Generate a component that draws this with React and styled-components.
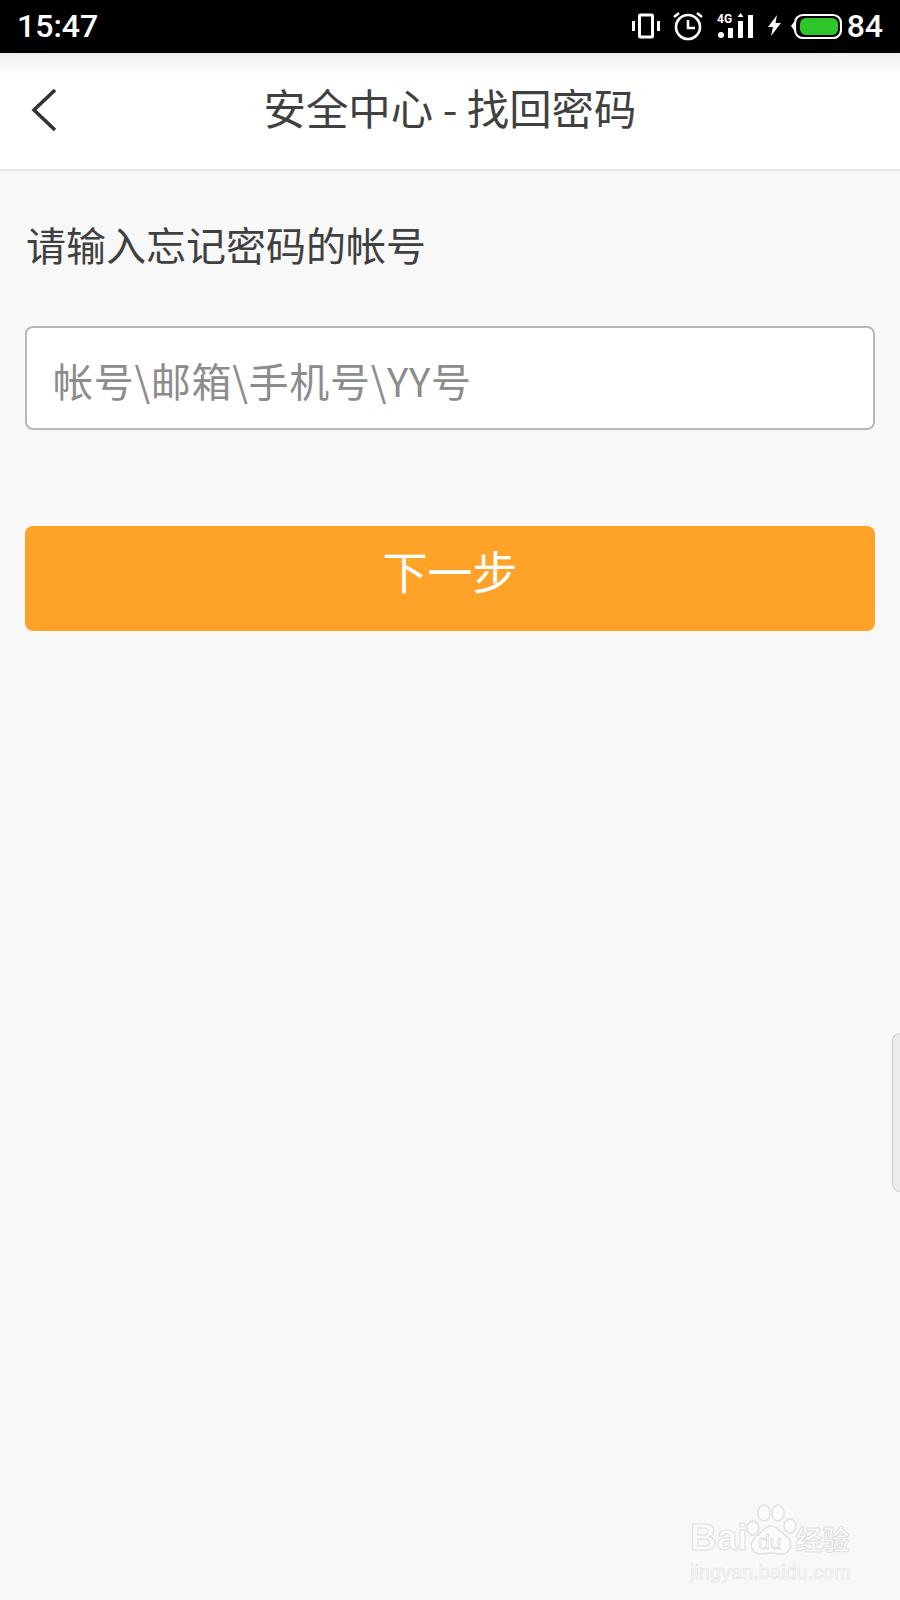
import React from 'react'
import styled, { createGlobalStyle } from 'styled-components'

const GlobalStyle = createGlobalStyle`
  html, body {
    margin: 0;
    padding: 0;
    background: #f8f8f8;
  }
  * {
    box-sizing: border-box;
  }
`

const cjk = `"Noto Sans CJK SC", "Noto Sans", sans-serif`

const Page = styled.div`
  position: relative;
  display: flex;
  flex-direction: column;
  width: 900px;
  height: 1600px;
  overflow: hidden;
  background: #f8f8f8;
  font-family: ${cjk};
`

const StatusBar = styled.div`
  display: flex;
  align-items: center;
  justify-content: space-between;
  height: 53px;
  padding: 0 17px 2px 17px;
  background: #000;
  color: #fff;
  font-family: Roboto, sans-serif;
  font-weight: 500;
  font-size: 32px;
`

const StatusIcons = styled.div`
  display: flex;
  align-items: center;
  gap: 5px;
`

const Nav = styled.div`
  position: relative;
  display: flex;
  align-items: center;
  justify-content: center;
  height: 118px;
  padding-bottom: 8px;
  background: linear-gradient(#eeeeee 0, #f9f9f9 14px, #fff 28px);
  border-bottom: 2px solid #e6e6e6;
`

const BackButton = styled.div`
  position: absolute;
  left: 30px;
  top: 34px;
  display: flex;
`

const Title = styled.div`
  font-size: 42.4px;
  line-height: 56px;
  color: #404040;
`

const Content = styled.div`
  display: flex;
  flex-direction: column;
  padding: 0 25px;
`

const Label = styled.div`
  margin-top: 45px;
  margin-bottom: 2px;
  font-size: 40px;
  line-height: 56px;
  color: #404040;
  padding-left: 1px;
`

const InputBox = styled.div`
  display: flex;
  align-items: center;
  height: 104px;
  margin-top: 52px;
  padding: 4px 0 0 26px;
  background: #fff;
  border: 2px solid #b8b8b8;
  border-radius: 8px;
  font-size: 40px;
  letter-spacing: 0.7px;
  color: #8c8c8c;
`

const NextButton = styled.div`
  display: flex;
  align-items: center;
  justify-content: center;
  height: 105px;
  margin-top: 96px;
  padding-bottom: 16px;
  background: #fea328;
  border-radius: 8px;
  font-size: 45px;
  color: #fff;
`

const SideTab = styled.div`
  position: absolute;
  right: 0;
  top: 1033px;
  width: 8px;
  height: 159px;
  background: #ececec;
  border: 1px solid #cfcfcf;
  border-right: 0;
  border-radius: 8px 0 0 8px;
`

const Watermark = styled.div`
  position: absolute;
  left: 690px;
  top: 1504px;
  width: 170px;
  height: 80px;
  color: #fbfbfb;
  -webkit-text-stroke: 1px #e0e0e0;
  font-family: "Liberation Sans", sans-serif;
`

const MarkRow = styled.div`
  display: flex;
  align-items: flex-end;
  height: 54px;
  font-size: 37px;
  font-weight: 700;
  line-height: 40px;
`

const MarkCn = styled.span`
  margin-left: -2px;
  font-family: ${cjk};
  font-size: 27px;
  line-height: 38px;
  font-weight: 700;
`

const MarkUrl = styled.div`
  margin-top: 2px;
  font-size: 19.5px;
  line-height: 24px;
  letter-spacing: 0.2px;
  font-weight: 400;
  -webkit-text-stroke: 0.6px #e2e2e2;
  white-space: nowrap;
`

const Vibrate = () => (
  <svg width="28" height="26" viewBox="0 0 28 26" fill="none" stroke="#fff" style={{ marginRight: -1 }}>
    <rect x="7.5" y="2" width="13" height="22" rx="1" strokeWidth="3" />
    <path d="M1.5 8v10M26.500 8v10" strokeWidth="3" />
  </svg>
)

const Alarm = () => (
  <svg width="32" height="30" viewBox="0 0 32 30" fill="none" stroke="#fff" style={{ marginLeft: 8 }}>
    <circle cx="16" cy="16" r="12" strokeWidth="2.6" />
    <path d="M16 9v8h7" strokeWidth="2.6" />
    <path d="M2 6l5-4M30 6l-5-4" strokeWidth="2.4" />
  </svg>
)

const Signal = () => (
  <svg width="38" height="27" viewBox="0 0 38 27" fill="#fff" style={{ marginLeft: 8 }}>
    <text x="0" y="11" fontSize="12" fontWeight="700" fontFamily="Roboto, sans-serif">4G</text>
    <circle cx="4" cy="23" r="3" />
    <rect x="11" y="16" width="5" height="10" />
    <rect x="21" y="9" width="5" height="17" />
    <path d="M23.5 1l3 4h-6z" />
    <rect x="31" y="3" width="5" height="23" />
  </svg>
)

const Bolt = () => (
  <svg width="15" height="21" viewBox="0 0 15 21" fill="#fff" style={{ marginLeft: 7 }}>
    <path d="M10 0L1 12h5l-2 9 10-13H8.500z" />
  </svg>
)

const Battery = () => (
  <svg width="52" height="26" viewBox="0 0 52 26" style={{ marginLeft: 3 }}>
    <path d="M1 13l3-4v8z" fill="#fff" />
    <rect x="5" y="2" width="46" height="23" rx="8" fill="none" stroke="#fff" strokeWidth="2.2" />
    <rect x="10" y="5" width="38" height="17" rx="6" fill="#2ec52a" />
  </svg>
)

const BackIcon = () => (
  <svg width="30" height="46" viewBox="0 0 30 46" fill="none" stroke="#333" strokeWidth="3.6">
    <path d="M25 3L4 23l21 20" />
  </svg>
)

const Paw = () => (
  <svg width="52" height="54" viewBox="0 0 52 54" fill="#fbfbfb" stroke="#e0e0e0" strokeWidth="1.4" style={{ margin: '0 0 0 -2px' }}>
    <ellipse cx="7" cy="24" rx="6" ry="7" />
    <ellipse cx="18" cy="9" rx="6" ry="8" />
    <ellipse cx="32" cy="9" rx="6" ry="8" />
    <ellipse cx="44" cy="22" rx="6" ry="7" />
    <path d="M25 22c7 0 9 6 15 10 8 6 5 19-6 18-3 0-6-1-9-1s-6 1-9 1C5 51 2 39 10 33c6-4 8-11 15-11z" />
    <text x="12" y="45" fontSize="21" fontWeight="400" fontFamily="Liberation Sans, sans-serif" strokeWidth="0.8">du</text>
  </svg>
)

const App = () => (
  <Page>
    <GlobalStyle />
    <StatusBar>
      <span>15:47</span>
      <StatusIcons>
        <Vibrate />
        <Alarm />
        <Signal />
        <Bolt />
        <Battery />
        <span>84</span>
      </StatusIcons>
    </StatusBar>
    <Nav>
      <BackButton>
        <BackIcon />
      </BackButton>
      <Title>安全中心 - 找回密码</Title>
    </Nav>
    <Content>
      <Label>请输入忘记密码的帐号</Label>
      <InputBox>帐号\邮箱\手机号\YY号</InputBox>
      <NextButton>下一步</NextButton>
    </Content>
    <SideTab />
    <Watermark>
      <MarkRow>
        Bai
        <Paw />
        <MarkCn>经验</MarkCn>
      </MarkRow>
      <MarkUrl>jingyan.baidu.com</MarkUrl>
    </Watermark>
  </Page>
)

export default App
